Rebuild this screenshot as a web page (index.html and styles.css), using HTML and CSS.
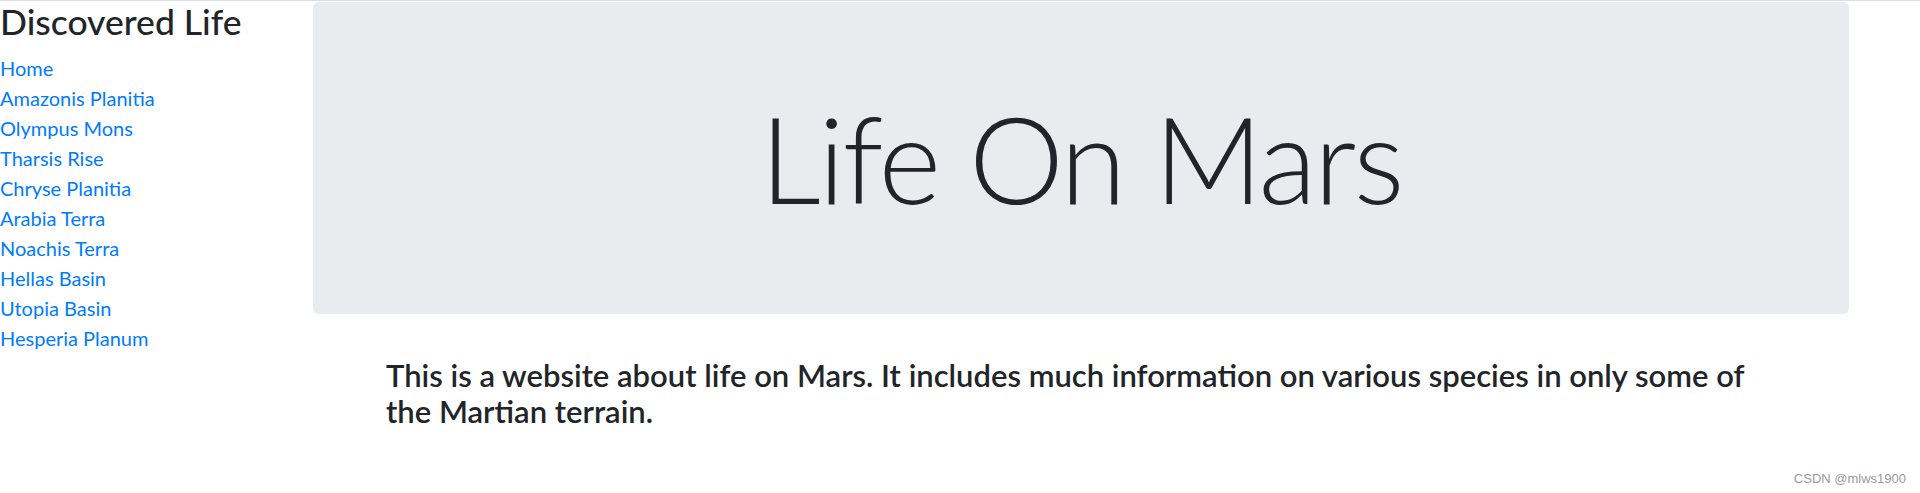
FILE: index.html
```html
<!DOCTYPE html>
<html lang="en">
<head>
<meta charset="utf-8">
<title>Discovered Life</title>
<link rel="stylesheet" href="styles.css">
</head>
<body>
<div class="page">
  <aside class="sidebar">
    <h3 class="side-title">Discovered Life</h3>
    <nav class="side-nav">
      <a href="#">Home</a>
      <a href="#">Amazonis Planitia</a>
      <a href="#">Olympus Mons</a>
      <a href="#">Tharsis Rise</a>
      <a href="#">Chryse Planitia</a>
      <a href="#">Arabia Terra</a>
      <a href="#">Noachis Terra</a>
      <a href="#">Hellas Basin</a>
      <a href="#">Utopia Basin</a>
      <a href="#">Hesperia Planum</a>
    </nav>
  </aside>
  <main class="main">
    <div class="jumbotron">
      <h1 class="display">Life On Mars</h1>
    </div>
    <h4 class="intro">This is a website about life on Mars. It includes much information on various species in only some of the Martian terrain.</h4>
  </main>
</div>
<div class="watermark">CSDN @mlws1900</div>
</body>
</html>
```
FILE: styles.css
```css
html, body {
  margin: 0;
  padding: 0;
}
body {
  background: #fff;
  color: #212529;
  font-family: Lato, "Liberation Sans", sans-serif;
  border-top: 1px solid #dcdfe2;
  height: 492px;
  position: relative;
  overflow: hidden;
}
.page {
  display: flex;
  align-items: flex-start;
  padding-top: 1px;
}
.sidebar {
  width: 313px;
  flex: none;
}
.side-title {
  margin: -1px 0 10px;
  font-size: 35.5px;
  line-height: 42px;
  font-weight: 500;
}
.side-nav {
  display: flex;
  flex-direction: column;
}
.side-nav a {
  color: #007bff;
  text-decoration: none;
  font-size: 20px;
  line-height: 30px;
}
.main {
  width: 1536px;
  flex: none;
}
.jumbotron {
  background: #e9ecef;
  border-radius: 6px;
  height: 312px;
  display: flex;
  align-items: center;
  justify-content: center;
}
.display {
  margin: 0;
  font-size: 120px;
  line-height: 144px;
  font-weight: 300;
  letter-spacing: -2.4px;
}
.intro {
  margin: 43px 0 0;
  padding: 0 73px;
  font-size: 31px;
  line-height: 36px;
  font-weight: 600;
}
.watermark {
  position: absolute;
  right: 14px;
  bottom: 7px;
  font-family: "Liberation Sans", Arial, sans-serif;
  font-size: 13px;
  color: #9a9a9a;
}
```
